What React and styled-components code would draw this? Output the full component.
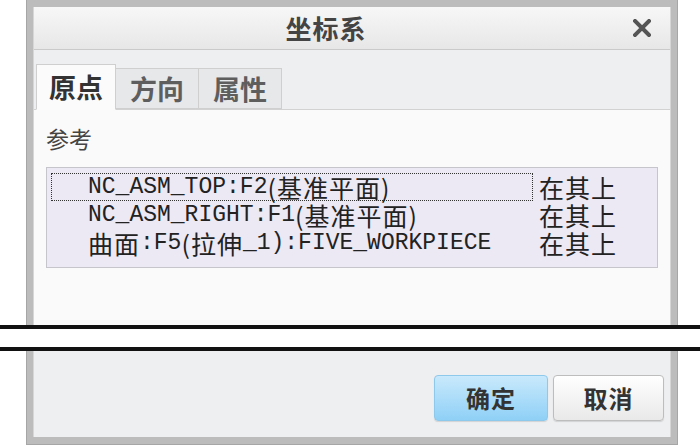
import React from 'react';
import styled, { createGlobalStyle } from 'styled-components';

const GlobalStyle = createGlobalStyle`
  html, body {
    margin: 0;
    padding: 0;
    background: #ffffff;
  }
  body {
    width: 700px;
    height: 445px;
    overflow: hidden;
    font-family: "Noto Sans CJK SC", "Liberation Sans", sans-serif;
    color: #333;
  }
`;

const Page = styled.div`
  display: flex;
  flex-direction: column;
  width: 700px;
  height: 445px;
`;

const Frame = styled.div`
  margin-left: 26px;
  width: 652px;
  box-sizing: border-box;
  background: #bcbcbc;
  border-left: 1px solid #a6a6a6;
  border-right: 1px solid #a6a6a6;
  padding: ${p => (p.$part === 'top' ? '7px 6px 0 6px' : '0 6px 7px 6px')};
  border-bottom: ${p => (p.$part === 'top' ? 'none' : '1px solid #a6a6a6')};
`;

const Inner = styled.div`
  display: flex;
  flex-direction: column;
  background: #eeeff1;
  border-left: 1px solid #d6d6d6;
  border-right: 1px solid #d6d6d6;
`;

const TitleBar = styled.div`
  display: flex;
  align-items: center;
  height: 42px;
  background: linear-gradient(#f7f7f7, #e7e7e7);
  border-bottom: 1px solid #cacaca;
`;

const Title = styled.div`
  flex: 1;
  text-align: center;
  font-size: 26px;
  line-height: 32px;
  font-weight: 700;
  color: #444;
  letter-spacing: 1px;
`;

const Close = styled.div`
  width: 48px;
  display: flex;
  justify-content: center;
  align-items: center;
  padding-right: 4px;
`;

const TabStrip = styled.div`
  display: flex;
  align-items: flex-end;
  height: 59px;
  padding-left: 2px;
  border-bottom: 1px solid #d2d2d2;
`;

const Tab = styled.div`
  box-sizing: border-box;
  height: ${p => (p.$active ? '46px' : '41px')};
  padding: 0 ${p => (p.$active ? '12px' : '14px')};
  margin-bottom: ${p => (p.$active ? '-1px' : '0')};
  display: flex;
  align-items: center;
  font-size: 27px;
  line-height: 32px;
  font-weight: 700;
  color: ${p => (p.$active ? '#333' : '#5e5e5e')};
  background: ${p => (p.$active ? '#fbfbfb' : '#e7e8ea')};
  border: 1px solid #cfcfcf;
  border-bottom: ${p => (p.$active ? '1px solid #fbfbfb' : '1px solid #cfcfcf')};
  border-left: ${p => (p.$first ? '1px solid #cfcfcf' : 'none')};
`;

const Pane = styled.div`
  height: 215px;
  box-sizing: border-box;
  background: #fafafa;
  padding: 13px 12px 0 12px;
`;

const Label = styled.div`
  font-size: 23px;
  line-height: 30px;
  color: #444;
  margin-bottom: 14px;
`;

const List = styled.div`
  display: flex;
  flex-direction: column;
  height: 101px;
  box-sizing: border-box;
  padding: 5px 4px 0 4px;
  background: #ece8f4;
  border: 1px solid #c7c5cc;
`;

const Row = styled.div`
  display: grid;
  grid-template-columns: 482px 1fr;
  height: 28px;
  align-items: center;
`;

const Ref = styled.div`
  box-sizing: border-box;
  height: 28px;
  display: flex;
  align-items: center;
  padding-left: 36px;
  white-space: nowrap;
  font-family: "Liberation Mono", "Noto Sans CJK SC", monospace;
  font-size: 23px;
  line-height: 24px;
  color: #222;
  border: 1px dotted ${p => (p.$focus ? '#333' : 'transparent')};
`;

const Han = styled.span`
  font-family: "Noto Sans CJK SC", sans-serif;
  font-size: 25px;
  line-height: 24px;
  letter-spacing: 1px;
`;

const Placement = styled.div`
  padding-left: 6px;
  font-size: 25px;
  line-height: 26px;
  letter-spacing: 1px;
  color: #222;
`;

const Break = styled.div`
  height: 18px;
  background: #ffffff;
  border-top: 4px solid #111;
  border-bottom: 4px solid #111;
`;

const Footer = styled.div`
  height: 86px;
  display: flex;
  justify-content: flex-end;
  align-items: flex-start;
  gap: 5px;
  padding: 24px 6px 0 0;
  box-sizing: border-box;
  background: #eeeff1;
`;

const Button = styled.button`
  height: 46px;
  width: ${p => (p.$primary ? '114px' : '111px')};
  font-family: "Noto Sans CJK SC", sans-serif;
  font-size: 24px;
  line-height: 30px;
  font-weight: 700;
  color: #333;
  letter-spacing: 1px;
  border-radius: 4px;
  border: 1px solid ${p => (p.$primary ? '#8ec8ea' : '#bdbdbd')};
  background: ${p =>
    p.$primary
      ? 'linear-gradient(#c9e9fc, #8fd0f6)'
      : 'linear-gradient(#ffffff, #e9e9e9)'};
  box-shadow: 0 1px 1px rgba(0, 0, 0, 0.12);
  cursor: pointer;
`;

const rows = [
  { parts: ['NC_ASM_TOP:F2', '(基准平面)'], focus: true },
  { parts: ['NC_ASM_RIGHT:F1', '(基准平面)'] },
  { parts: ['曲面', ':F5', '(拉伸', '_1):FIVE_WORKPIECE'] },
];

const renderParts = parts =>
  parts.map((p, i) =>
    /[\u4e00-\u9fff]/.test(p) ? <Han key={i}>{p}</Han> : <React.Fragment key={i}>{p}</React.Fragment>
  );

export default function App() {
  return (
    <>
      <GlobalStyle />
      <Page>
        <Frame $part="top">
          <Inner>
            <TitleBar>
              <Title>坐标系</Title>
              <Close>
                <svg width="18" height="18" viewBox="0 0 18 18">
                  <path d="M2 2 L16 16 M16 2 L2 16" stroke="#555" strokeWidth="4" strokeLinecap="square" />
                </svg>
              </Close>
            </TitleBar>
            <TabStrip>
              <Tab $active $first>原点</Tab>
              <Tab>方向</Tab>
              <Tab>属性</Tab>
            </TabStrip>
            <Pane>
              <Label>参考</Label>
              <List>
                {rows.map((r, i) => (
                  <Row key={i}>
                    <Ref $focus={r.focus}>{renderParts(r.parts)}</Ref>
                    <Placement>在其上</Placement>
                  </Row>
                ))}
              </List>
            </Pane>
          </Inner>
        </Frame>
        <Break />
        <Frame $part="bottom">
          <Inner>
            <Footer>
              <Button $primary>确定</Button>
              <Button>取消</Button>
            </Footer>
          </Inner>
        </Frame>
      </Page>
    </>
  );
}
